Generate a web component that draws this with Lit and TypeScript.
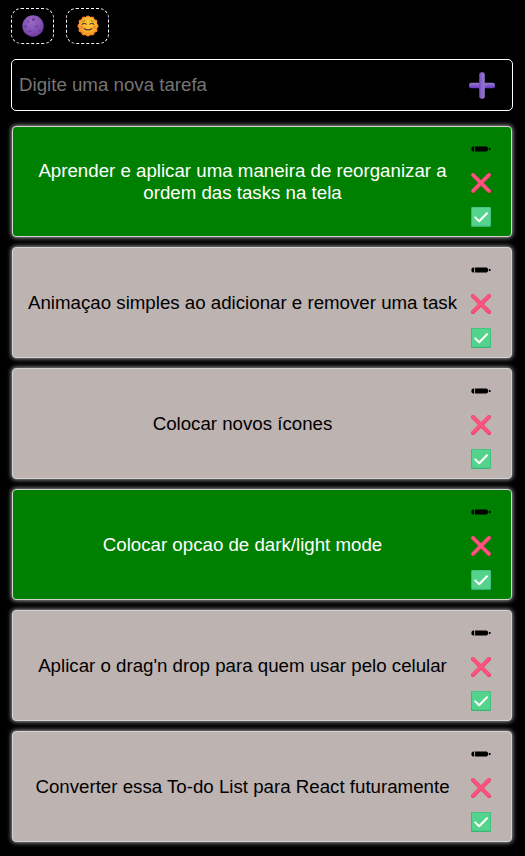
import { LitElement, html, css, svg } from "lit";
import { customElement, state } from "lit/decorators.js";
import { classMap } from "lit/directives/class-map.js";

interface Task {
  text: string;
  done: boolean;
}

const moonIcon = html`<svg width="22" height="22" viewBox="0 0 22 22">
  <defs>
    <radialGradient id="moon" cx="42%" cy="30%" r="75%">
      <stop offset="0" stop-color="#9b6bc6" />
      <stop offset="0.6" stop-color="#8150b2" />
      <stop offset="1" stop-color="#6b389b" />
    </radialGradient>
  </defs>
  <circle cx="11" cy="11" r="10.7" fill="url(#moon)" />
  <g fill="#6f419f">
    <ellipse cx="11.6" cy="4.6" rx="1.7" ry="1.9" />
    <circle cx="6.2" cy="6.5" r="1.1" />
    <ellipse cx="3.4" cy="11.3" rx="1.2" ry="1.6" />
    <circle cx="14.8" cy="11.6" r="1.2" />
    <ellipse cx="8" cy="16.6" rx="1.8" ry="1.4" />
    <circle cx="17.4" cy="16" r="1.4" />
  </g>
  <g fill="none" stroke="#a274cd" stroke-width="0.5">
    <path d="M10.6 6.8q1.8.6 2.8-1.4" />
    <path d="M6.6 18.2q2 .8 3.4-.8" />
  </g>
</svg>`;

const rays = Array.from({ length: 12 }, (_, i) => {
  const angle = (i * Math.PI) / 6;
  return svg`<circle cx=${11 + 8.3 * Math.sin(angle)} cy=${11 - 8.3 * Math.cos(angle)} r="2.3" />`;
});

const sunIcon = html`<svg width="22" height="22" viewBox="0 0 22 22">
  <defs>
    <radialGradient id="sun" cx="55%" cy="38%" r="65%">
      <stop offset="0" stop-color="#fccb35" />
      <stop offset="0.65" stop-color="#f9b029" />
      <stop offset="1" stop-color="#f58b25" />
    </radialGradient>
  </defs>
  <g fill="#f47c24">${rays}</g>
  <circle cx="11" cy="11" r="9.3" fill="url(#sun)" />
  <circle cx="4.6" cy="12.2" r="1.5" fill="#f68139" />
  <circle cx="17.4" cy="12.2" r="1.5" fill="#f68139" />
  <g fill="none" stroke="#573b3a" stroke-width="1.2" stroke-linecap="round">
    <path d="M5.2 9.4Q7.1 7.2 9 9.2" />
    <path d="M13 9.2Q14.9 7.2 16.8 9.4" />
    <path d="M7.2 13.7Q11 16 14.8 13.7" />
  </g>
  <g fill="none" stroke="#a7652d" stroke-width="0.8" stroke-linecap="round">
    <path d="M5.5 6.5 8 5.4" />
    <path d="M14 5.4 16.5 6.5" />
  </g>
</svg>`;

const plusIcon = html`<svg width="26" height="27" viewBox="0 0 26 27">
  <defs>
    <linearGradient id="bar" x1="0" y1="0" x2="0" y2="1">
      <stop offset="0" stop-color="#9679cd" />
      <stop offset="0.5" stop-color="#7e5cc8" />
      <stop offset="1" stop-color="#6c2fd0" />
    </linearGradient>
    <linearGradient id="post" x1="0" y1="0" x2="1" y2="0">
      <stop offset="0" stop-color="#7448c5" />
      <stop offset="0.4" stop-color="#8668cb" />
      <stop offset="1" stop-color="#9278c3" />
    </linearGradient>
  </defs>
  <rect x="0" y="10.7" width="26" height="5.6" rx="2.3" fill="url(#bar)" />
  <rect x="10.2" y="0.2" width="5.6" height="26.6" rx="2.3" fill="url(#post)" />
</svg>`;

const pencilIcon = html`<svg width="20" height="20" viewBox="0 0 20 20">
  <path
    d="M3.2 7.5v5H2Q.3 12 .3 10T2 7.5zM4.1 7.5H16V12.5H4.1zM16 8 17 8.5v3l-1 .5zM17.8 8.7 19.8 9.6v.8L17.8 11.3z"
  />
</svg>`;

const crossIcon = html`<svg width="20" height="20" viewBox="0 0 20 20">
  <g fill="none" stroke-linecap="round">
    <path d="M2 2 18 18M18 2 2 18" stroke="#f13d68" stroke-width="3.9" />
    <path d="M2 1.7 17.7 17.6M17.8 1.8 2 17.6" stroke="#fc5581" stroke-width="2.7" />
  </g>
</svg>`;

const checkIcon = html`<svg width="20" height="20" viewBox="0 0 20 20">
  <rect width="20" height="20" rx="1.2" fill="#38b678" />
  <rect x="0.9" y="0.4" width="18.5" height="18.4" rx="1" fill="#54d38c" />
  <path
    d="M4.2 10.4 8.2 14.3 16 6.2"
    fill="none"
    stroke="#fff"
    stroke-width="2"
    stroke-linecap="round"
    stroke-linejoin="round"
  />
</svg>`;

@customElement("app-root")
export class AppRoot extends LitElement {
  static styles = css`
    :host {
      display: block;
      box-sizing: border-box;
      min-height: 856px;
      padding: 8px 12px 0 11px;
      background: #000;
      color: #000;
      font: 18.7px/22px "Liberation Sans", Arial, sans-serif;
    }
    button {
      display: flex;
      align-items: center;
      justify-content: center;
      margin: 0;
      padding: 0;
      border: 0;
      background: none;
      color: #000;
      cursor: pointer;
    }
    svg {
      display: block;
    }
    .themes {
      display: flex;
      gap: 12px;
    }
    .theme {
      box-sizing: border-box;
      width: 43px;
      height: 36px;
      border: 1px dashed #fff;
      border-radius: 10px;
    }
    .entry {
      display: flex;
      align-items: center;
      box-sizing: border-box;
      height: 52px;
      margin-top: 15px;
      padding: 0 17px 0 7px;
      border: 1px solid #fff;
      border-radius: 5px;
    }
    .field {
      flex: 1;
      min-width: 0;
      padding: 0;
      border: 0;
      outline: 0;
      background: none;
      color: #fff;
      font: inherit;
    }
    .field::placeholder {
      color: #757575;
      opacity: 1;
    }
    .list {
      display: flex;
      flex-direction: column;
      gap: 10px;
      margin: 15px 1px 0;
      padding: 0;
      list-style: none;
    }
    .task {
      display: flex;
      align-items: center;
      gap: 9px;
      box-sizing: border-box;
      height: 111px;
      padding: 0 20px 0 10px;
      border: 1px solid #d3d3d3;
      border-radius: 4px;
      background: #bdb3b1;
      box-shadow: 0 0 5px #d3d3d3;
    }
    .done {
      background: #008000;
      color: #fff;
    }
    .text {
      flex: 1;
      text-align: center;
    }
    .actions {
      display: flex;
      flex-direction: column;
      gap: 14px;
      padding-top: 2px;
    }
  `;

  @state() private tasks: Task[] = [
    { text: "Aprender e aplicar uma maneira de reorganizar a ordem das tasks na tela", done: true },
    { text: "Animaçao simples ao adicionar e remover uma task", done: false },
    { text: "Colocar novos ícones", done: false },
    { text: "Colocar opcao de dark/light mode", done: true },
    { text: "Aplicar o drag'n drop para quem usar pelo celular", done: false },
    { text: "Converter essa To-do List para React futuramente", done: false },
  ];

  private add() {
    const field = this.renderRoot.querySelector<HTMLInputElement>(".field")!;
    const text = field.value.trim();
    if (!text) return;
    this.tasks = [...this.tasks, { text, done: false }];
    field.value = "";
  }

  private remove(task: Task) {
    this.tasks = this.tasks.filter((t) => t !== task);
  }

  private toggle(task: Task) {
    this.tasks = this.tasks.map((t) => (t === task ? { ...t, done: !t.done } : t));
  }

  render() {
    return html`
      <div class="themes">
        <button class="theme">${moonIcon}</button>
        <button class="theme">${sunIcon}</button>
      </div>
      <div class="entry">
        <input class="field" placeholder="Digite uma nova tarefa" />
        <button @click=${this.add}>${plusIcon}</button>
      </div>
      <ul class="list">
        ${this.tasks.map(
          (task) => html`<li class=${classMap({ task: true, done: task.done })}>
            <span class="text">${task.text}</span>
            <div class="actions">
              <button>${pencilIcon}</button>
              <button @click=${() => this.remove(task)}>${crossIcon}</button>
              <button @click=${() => this.toggle(task)}>${checkIcon}</button>
            </div>
          </li>`,
        )}
      </ul>
    `;
  }
}
